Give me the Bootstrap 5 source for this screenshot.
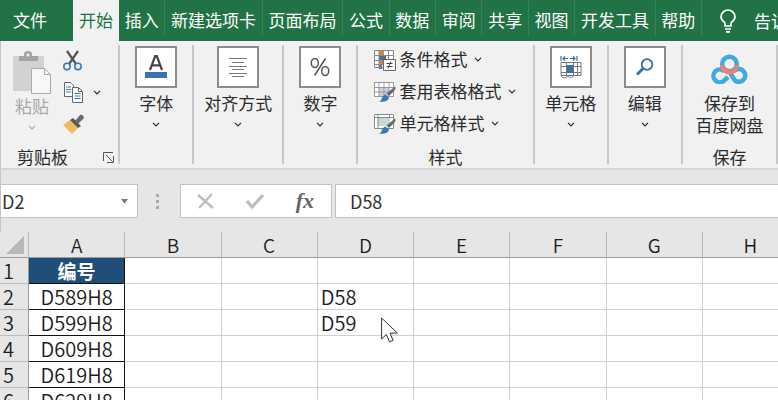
<!DOCTYPE html>
<html lang="zh-CN">
<head>
<meta charset="utf-8">
<meta name="viewport" content="width=device-width, initial-scale=1">
<title>工作簿</title>
<link href="https://cdn.jsdelivr.net/npm/bootstrap@5.3.0/dist/css/bootstrap.min.css" rel="stylesheet">
<style>
  body { font-family: "Noto Sans CJK SC", sans-serif; font-size: 17px; line-height: 24px; color: #2b2b2b; background: #e6e6e6; }
  button { color: inherit; }
  .plain { border: 0; background: none; padding: 0; }
  .tabs { background: #217346; height: 41px; }
  .tabs .nav-link { color: #fff; padding: 0; line-height: 39px; border-radius: 0; text-align: center; white-space: nowrap; }
  .tabs .file-tab { width: 73px; padding-right: 13px; }
  .tabs .nav-link.active { width: 46px; background: #f1f1f1; color: #217346; line-height: 39px; }
  .tabs .ruled { border-right: 1px solid #35855a; height: 35px; }
  .tell { width: 76px; padding-left: 17px; gap: 17px; line-height: 39px; }
  .ribbon { background: #f1f1f1; height: 129px; padding-top: 4px; border-bottom: 2px solid #d6d6d6; border-left: 1px solid #c6c6c6; }
  .tool-group { flex: 74 1 74px; height: 119px; border-right: 2px solid #c8c8c8; padding-top: 1px; white-space: nowrap; }
  .group-clip { flex: 119 1 119px; }
  .group-align { flex: 90 1 90px; }
  .group-style { flex: 176 1 176px; }
  .group-save { flex: 95 1 95px; }
  .tile { width: 42px; height: 42px; border: 2px solid #8c8c8c; background: #fff; }
  .tool-label { line-height: 30px; }
  .chev { width: 8px; height: 5px; }
  .chev-row { height: 12px; }
  .caption { line-height: 22px; }
  .tool-body { height: 100px; }
  .clip-main { padding-left: 11px; gap: 11px; }
  .paste { width: 40px; color: #a9a9a9; padding-top: 5px; }
  .small-tools { padding-top: 4px; gap: 11px; }
  .copy-tool { gap: 10px; }
  .style-row { height: 32px; padding: 1px 0 0 16px; gap: 3px; }
  .style-row svg:first-child { margin-top: 2px; }
  .style-row .chev { margin: 10px 0 0 4px; }
  .save-tool { padding-top: 8px; gap: 8px; }
  .formula-row { padding: 14px 0; border-left: 1px solid #c6c6c6; }
  .field { height: 34px; background: #fff; border: 1px solid #c3c3c3; }
  .field input { font-size: 18px; color: #333; border: 0; padding: 0; min-width: 0; background: none; outline: 0; }
  .name-box { width: 137px; border-left: 0; padding-right: 9px; }
  .name-box input { padding-left: 1px; }
  .dots { width: 42px; padding-right: 4px; }
  .fx-box { width: 152px; padding: 0 17px 0 16px; margin-right: 3px; }
  .fx { font: italic bold 22px/30px "Liberation Serif", serif; color: #666; }
  .formula { border-right: 0; padding-left: 14px; }
  .sheet { overflow: hidden; }
  .grid { table-layout: fixed; width: calc(100% + 21px); border-collapse: separate; border-spacing: 0; font-size: 20px; line-height: 25px; background: #fff; color: #1c1c1c; font-weight: 350; }
  .grid th, .grid td { height: 26px; padding: 0; border-right: 1px solid #d0d0d0; border-bottom: 1px solid #d0d0d0; white-space: nowrap; }
  .grid thead th { background: #e6e6e6; text-align: center; font-size: 19px; font-weight: 350; border-right-color: #b9b9b9; border-bottom-color: #9c9c9c; }
  .grid tbody th { background: #e6e6e6; font-weight: 350; padding-left: 3px; border-right-color: #9c9c9c; border-bottom-color: #bdbdbd; }
  .grid .num-col { width: 29px; }
  .grid td:nth-child(2) { text-align: center; border-color: #111; }
  .grid td.field-name { background: #1f4e79; color: #fff; font-weight: 700; font-size: 19px; }
  .grid td:nth-child(5) { padding-left: 3px; }
  .pointer { position: absolute; left: 381px; top: 317px; pointer-events: none; }
</style>
<script src="https://cdn.jsdelivr.net/npm/bootstrap@5.3.0/dist/js/bootstrap.bundle.min.js"></script>
</head>
<body class="vh-100 overflow-hidden d-flex flex-column position-relative">
<svg class="d-none" aria-hidden="true">
  <symbol id="chevron" viewBox="0 0 8 5"><path d="M1 .8 4 3.800 7 .8" fill="none" stroke="currentColor" stroke-width="1.200"/></symbol>
  <symbol id="brush" viewBox="0 0 22 22"><path d="M21 5.500q1.500 2-1 4.500L15 15l-2.500-2.500Z" fill="#696969"/><path d="m11.500 13.500 3.500 3c-1 4-5 5-10 4 4-1 2-6 6.500-7Z" fill="#3778b5"/></symbol>
</svg>

<nav class="tabs nav flex-nowrap flex-shrink-0 overflow-hidden">
  <a class="nav-link file-tab flex-shrink-0" href="#">文件</a>
  <a class="nav-link active flex-shrink-0" href="#" aria-current="page">开始</a>
  <a class="nav-link ruled flex-grow-1" href="#">插入</a>
  <a class="nav-link ruled flex-grow-1" href="#">新建选项卡</a>
  <a class="nav-link ruled flex-grow-1" href="#">页面布局</a>
  <a class="nav-link ruled flex-grow-1" href="#">公式</a>
  <a class="nav-link ruled flex-grow-1" href="#">数据</a>
  <a class="nav-link ruled flex-grow-1" href="#">审阅</a>
  <a class="nav-link ruled flex-grow-1" href="#">共享</a>
  <a class="nav-link ruled flex-grow-1" href="#">视图</a>
  <a class="nav-link ruled flex-grow-1" href="#">开发工具</a>
  <a class="nav-link ruled flex-grow-1" href="#">帮助</a>
  <button type="button" class="plain tell d-flex align-items-center flex-shrink-0 text-white text-nowrap overflow-hidden">
    <svg class="flex-shrink-0" width="18" height="24" viewBox="0 0 18 24" fill="none" stroke="#fff" stroke-width="1.700"><path d="M6 17v-3C4 12 2 10.500 2 8a7 7 0 0 1 14 0c0 2.500-2 4-4 6v3ZM6 20h6M7 22.800h4"/></svg>
    <span>告诉我</span>
  </button>
</nav>

<section class="ribbon d-flex flex-shrink-0">
  <div class="tool-group group-clip">
    <div class="tool-body clip-main d-flex align-items-start">
      <button type="button" class="plain paste d-flex flex-column align-items-center" disabled>
        <svg width="40" height="43" viewBox="0 0 40 43"><path d="M1 5h31v35H1Z" fill="#d2d2d2"/><path d="M7 5h5V3q0-3 4-3t4 3v2h6v5H7Z" fill="#a3a3a3"/><circle cx="16" cy="4" r="1.500" fill="#f1f1f1"/><path d="M19.500 17.500h13l6 6v19h-19Z" fill="#f7f7f7" stroke="#aaa"/><path d="M32.500 17.500v6h6" fill="none" stroke="#aaa"/></svg>
        <span>粘贴</span>
        <span class="chev-row d-flex align-items-end"><svg class="chev"><use href="#chevron"/></svg></span>
      </button>
      <div class="small-tools d-flex flex-column">
        <button type="button" class="plain d-flex" aria-label="剪切"><svg width="20" height="21" viewBox="0 0 20 21" fill="none"><path d="m4 1 9 13M15 1 6 14" stroke="#555" stroke-width="2.200"/><circle cx="4" cy="16.500" r="3.200" stroke="#3778b5" stroke-width="1.500"/><circle cx="15" cy="16.500" r="3.200" stroke="#3778b5" stroke-width="1.500"/></svg></button>
        <button type="button" class="plain copy-tool d-flex align-items-center" aria-label="复制"><svg width="20" height="21" viewBox="0 0 20 21" fill="#fff" stroke="#666"><path d="M1.500.5h6l3 3v11h-9Z"/><path d="M3 5h5M3 7.500h5M3 10h5" stroke="#3778b5"/><path d="M9.500 5.500h6l4 4v11h-10Z"/><path d="M15.500 5.500v4h4" fill="none"/><path d="M11.500 11.500h6M11.500 14h6M11.500 16.500h6" stroke="#3778b5"/></svg><svg class="chev"><use href="#chevron"/></svg></button>
        <button type="button" class="plain d-flex" aria-label="格式刷"><svg width="22" height="21" viewBox="0 0 22 21"><path d="M0 11 7 6l8 8-6 6Z" fill="#f2b960"/><path d="m7 6 3-2 8 8-3 2Z" fill="#555"/><path d="m12 7 5-6q3-1 4 3l-6 6Z" fill="#696969"/></svg></button>
      </div>
    </div>
    <div class="caption d-flex justify-content-between align-items-center ps-3 pe-1"><span>剪贴板</span>
      <button type="button" class="plain d-flex" aria-label="剪贴板选项"><svg width="11" height="11" viewBox="0 0 11 11" fill="none" stroke="#555"><path d="M.5 9V.5H10M3 3l6.500 6.500M10.500 4v6.500H4"/></svg></button></div>
  </div>

  <div class="tool-group">
    <button type="button" class="plain w-100 d-flex flex-column align-items-center">
      <span class="tile d-flex align-items-center justify-content-center"><svg width="22" height="24" viewBox="0 0 22 24"><path d="m5 15 5.200-14h1.600L17 15M7 10.300h8" fill="none" stroke="#4c4544" stroke-width="2.200"/><path d="M0 17h22v6H0Z" fill="#3a72b0"/></svg></span>
      <span class="tool-label">字体</span>
      <span class="chev-row d-flex align-items-center"><svg class="chev"><use href="#chevron"/></svg></span>
    </button>
  </div>

  <div class="tool-group group-align">
    <button type="button" class="plain w-100 d-flex flex-column align-items-center">
      <span class="tile d-flex align-items-center justify-content-center"><svg width="20" height="21" viewBox="0 0 20 21"><path d="M1 1.500h18M4 5.500h12M1 9.500h18M4 12.500h12M1 16.500h18M4 19.500h12" stroke="#777"/></svg></span>
      <span class="tool-label">对齐方式</span>
      <span class="chev-row d-flex align-items-center"><svg class="chev"><use href="#chevron"/></svg></span>
    </button>
  </div>

  <div class="tool-group">
    <button type="button" class="plain w-100 d-flex flex-column align-items-center">
      <span class="tile d-flex align-items-center justify-content-center"><svg width="20" height="20" viewBox="0 0 20 20" fill="none" stroke="#555" stroke-width="1.500"><ellipse cx="4.800" cy="6" rx="3.500" ry="4.500"/><ellipse cx="15.200" cy="14" rx="3.500" ry="4.500"/><path d="M15.500 1.500 4.500 18.500"/></svg></span>
      <span class="tool-label">数字</span>
      <span class="chev-row d-flex align-items-center"><svg class="chev"><use href="#chevron"/></svg></span>
    </button>
  </div>

  <div class="tool-group group-style">
    <div class="tool-body">
    <button type="button" class="plain style-row w-100 d-flex align-items-start">
      <svg width="22" height="22" viewBox="0 0 22 22"><path d="M.5 1.500h19v17H.5Z" fill="#fff"/><path d="M5 1h5v5H5Zm0 10h5v4H5Z" fill="#df8435"/><path d="M5 6h7v5H5Zm0 9h3v5H5Z" fill="#3973aa"/><path d="M.5 1.500h19v17H.5ZM.5 6.500h19M.5 11.500h19M.5 15.500h10M5 1v18M14.500 1v11" fill="none" stroke="#888"/><path d="M9.500 10.500h12v11h-12Z" fill="#fff" stroke="#666"/><path d="M12.500 14.500h6M12.500 17.500h6M17 12.500l-3 7" stroke="#444"/></svg>
      <span>条件格式</span><svg class="chev"><use href="#chevron"/></svg>
    </button>
    <button type="button" class="plain style-row w-100 d-flex align-items-start">
      <svg width="22" height="22" viewBox="0 0 22 22"><path d="M.5 1.500h19v14H.5Z" fill="#fff"/><path d="M5 6h10v9H5Z" fill="#c8d3df"/><path d="M.5 1.500h19v14H.5ZM.5 6.500h19M.5 11h19M5 1v15M10 1v15M15 1v15" fill="none" stroke="#999"/><use href="#brush"/></svg>
      <span>套用表格格式</span><svg class="chev"><use href="#chevron"/></svg>
    </button>
    <button type="button" class="plain style-row w-100 d-flex align-items-start">
      <svg width="22" height="22" viewBox="0 0 22 22"><path d="M.5 1.500h19v14H.5Z" fill="#fff"/><path d="M4 5h12v8H4Z" fill="#c5d9d9"/><path d="M.5 1.500h19v14H.5ZM.5 4.500h19M4 1v15M15.500 1v4" fill="none" stroke="#888"/><use href="#brush"/></svg>
      <span>单元格样式</span><svg class="chev"><use href="#chevron"/></svg>
    </button>
    </div>
    <div class="caption text-center">样式</div>
  </div>

  <div class="tool-group">
    <button type="button" class="plain w-100 d-flex flex-column align-items-center">
      <span class="tile d-flex align-items-center justify-content-center"><svg width="22" height="24" viewBox="0 0 22 24" fill="none" stroke="#777"><path d="M1 1v5M17 1v5M3 3.500h5M10 3.500h5M5 1.500l-2 2 2 2M13 1.500l2 2-2 2" stroke="#3470b0" stroke-width="1.200"/><path d="M1 7.500h20v13H1ZM1 11.500h20M1 17.500h20M6.500 7v14M13.500 7v14M17.500 7v14M1 21q1 2 4 2l3-2q4 3 6-.5"/><path d="M7 10h6v8H7Z" fill="#3470b0" stroke="none"/></svg></span>
      <span class="tool-label">单元格</span>
      <span class="chev-row d-flex align-items-center"><svg class="chev"><use href="#chevron"/></svg></span>
    </button>
  </div>

  <div class="tool-group">
    <button type="button" class="plain w-100 d-flex flex-column align-items-center">
      <span class="tile d-flex align-items-center justify-content-center"><svg width="18" height="18" viewBox="0 0 18 18" fill="none" stroke="#3470a8"><circle cx="11" cy="6.500" r="5.300" stroke-width="1.800"/><path d="m7 10.500-6 6" stroke-width="2.800"/></svg></span>
      <span class="tool-label">编辑</span>
      <span class="chev-row d-flex align-items-center"><svg class="chev"><use href="#chevron"/></svg></span>
    </button>
  </div>

  <div class="tool-group group-save">
    <button type="button" class="plain tool-body save-tool w-100 d-flex flex-column align-items-center">
      <svg width="38" height="30" viewBox="0 0 38 30" fill="none" stroke-width="4.500"><path d="M14.500 17.500a6.400 6.400 0 1 0-.5 9.200L18 23M20 18.500l4.500 7.500q2 2.200 5 1.800a6.400 6.400 0 1 0-6-10" stroke="#3fa9e4"/><circle cx="19.500" cy="10" r="7.300" stroke="#3fa9e4"/><path d="M12.200 11a7.300 7.300 0 0 0 14.600 0" stroke="#ee8172"/></svg>
      <span><span class="d-block caption">保存到</span><span class="d-block caption">百度网盘</span></span>
    </button>
    <div class="caption text-center">保存</div>
  </div>
</section>

<section class="formula-row d-flex align-items-center flex-shrink-0">
  <div class="field name-box d-flex align-items-center flex-shrink-0">
    <input class="w-100" type="text" value="D2" aria-label="名称框">
    <button type="button" class="plain d-flex" aria-label="名称列表"><svg width="7" height="5" viewBox="0 0 7 5"><path d="M0 0h7L3.500 4.500Z" fill="#777"/></svg></button>
  </div>
  <div class="dots d-flex justify-content-center flex-shrink-0"><svg width="3" height="15" viewBox="0 0 3 15" fill="#aaa"><path d="M0 0h3v3H0ZM0 6h3v3H0ZM0 12h3v3H0Z"/></svg></div>
  <div class="field fx-box d-flex align-items-center justify-content-between flex-shrink-0">
    <button type="button" class="plain d-flex" aria-label="取消"><svg width="17" height="16" viewBox="0 0 17 16"><path d="m1 2 15 13M15 1 2 15" stroke="#bdbdbd" stroke-width="2.400"/></svg></button>
    <button type="button" class="plain d-flex" aria-label="输入"><svg width="18" height="16" viewBox="0 0 18 16"><path d="m1 8 5 6L17 2" fill="none" stroke="#bdbdbd" stroke-width="3.200"/></svg></button>
    <button type="button" class="plain fx" aria-label="插入函数">fx</button>
  </div>
  <div class="field formula flex-grow-1 d-flex align-items-center"><input class="w-100" type="text" value="D58" aria-label="编辑栏"></div>
</section>

<main class="sheet flex-grow-1">
  <table class="grid">
    <thead><tr><th class="num-col" scope="col" aria-label="全选"><svg class="d-block ms-auto me-1" width="18" height="18" viewBox="0 0 18 18"><path d="M18 0v18H0Z" fill="#b8b8b8"/></svg></th><th scope="col">A</th><th scope="col">B</th><th scope="col">C</th><th scope="col">D</th><th scope="col">E</th><th scope="col">F</th><th scope="col">G</th><th scope="col">H</th></tr></thead>
    <tbody>
      <tr><th scope="row">1</th><td class="field-name">编号</td><td></td><td></td><td></td><td></td><td></td><td></td><td></td></tr>
      <tr><th scope="row">2</th><td>D589H8</td><td></td><td></td><td>D58</td><td></td><td></td><td></td><td></td></tr>
      <tr><th scope="row">3</th><td>D599H8</td><td></td><td></td><td>D59</td><td></td><td></td><td></td><td></td></tr>
      <tr><th scope="row">4</th><td>D609H8</td><td></td><td></td><td></td><td></td><td></td><td></td><td></td></tr>
      <tr><th scope="row">5</th><td>D619H8</td><td></td><td></td><td></td><td></td><td></td><td></td><td></td></tr>
      <tr><th scope="row">6</th><td>D629H8</td><td></td><td></td><td></td><td></td><td></td><td></td><td></td></tr>
    </tbody>
  </table>
</main>
<svg class="pointer" width="18" height="26" viewBox="0 0 18 26"><path d="M.6 1v21l4.700-4.500 3.200 7.300 3.600-1.500L9 16.200l7.300-.2Z" fill="#fff" stroke="#333"/></svg>
</body>
</html>
